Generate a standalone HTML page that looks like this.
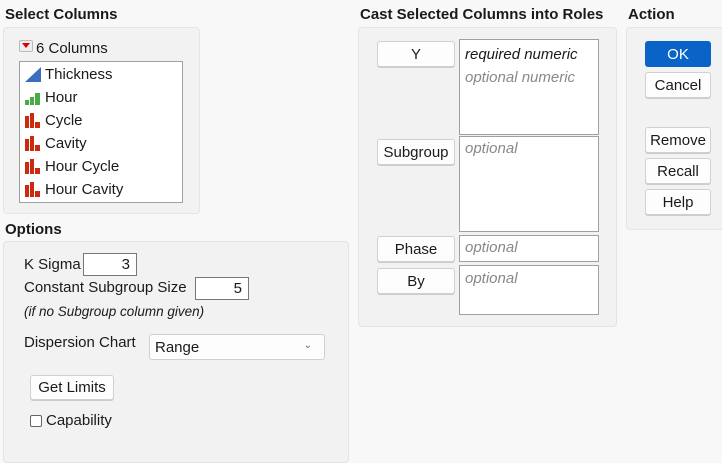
<!DOCTYPE html><html><head><style>
body{margin:0;width:722px;height:450px;background:#f8f8f8;font-family:"Liberation Sans",sans-serif;font-size:15px;color:#1a1a1a;position:relative;overflow:hidden}
.a{position:absolute;white-space:nowrap}
.t{font-weight:bold;font-size:15px}
.p{position:absolute;background:#f2f2f2;border:1px solid #e4e4e4;border-radius:4px}
.b{position:absolute;background:#fdfdfd;border:1px solid #d0d0d0;border-radius:3px;text-align:center;box-sizing:border-box;box-shadow:0 1px 0 #ccc}
.box{position:absolute;background:#fff;border:1px solid #a0a0a0;box-sizing:border-box;white-space:nowrap}
.i{font-style:italic;color:#888}
.it{position:absolute;left:4px;height:23px;line-height:23px}
.it span{position:absolute;left:21px;white-space:nowrap}
</style></head><body>
<div class="a t" style="left:5px;top:6px">Select Columns</div>
<div class="p" style="left:3px;top:27px;width:195px;height:185px"></div>
<div class="a" style="left:19px;top:40px;width:12px;height:10px;background:#eee;border:1px solid #bbb;border-radius:2px"><div style="position:absolute;left:2px;top:2px;width:0;height:0;border-left:4px solid transparent;border-right:4px solid transparent;border-top:5px solid #d00"></div></div>
<div class="a" style="left:36px;top:40px">6 Columns</div>
<div class="box" style="left:19px;top:61px;width:164px;height:142px">
<div class="it" style="top:1px"><svg width="18" height="16" style="position:absolute;top:4px"><polygon points="1,15 17,15 17,0" fill="#3a6fc0"/></svg><span>Thickness</span></div>
<div class="it" style="top:24px"><svg width="18" height="16" style="position:absolute;top:4px"><rect x="1" y="10" width="4" height="5" fill="#4aaa4a"/><rect x="6" y="7" width="4" height="8" fill="#4aaa4a"/><rect x="11" y="3" width="5" height="12" fill="#4aaa4a"/></svg><span>Hour</span></div>
<div class="it" style="top:47px"><svg width="18" height="16" style="position:absolute;top:4px"><rect x="1" y="3" width="4" height="12" fill="#cc2a10"/><rect x="6" y="0" width="4" height="15" fill="#cc2a10"/><rect x="11" y="9" width="5" height="6" fill="#cc2a10"/></svg><span>Cycle</span></div>
<div class="it" style="top:70px"><svg width="18" height="16" style="position:absolute;top:4px"><rect x="1" y="3" width="4" height="12" fill="#cc2a10"/><rect x="6" y="0" width="4" height="15" fill="#cc2a10"/><rect x="11" y="9" width="5" height="6" fill="#cc2a10"/></svg><span>Cavity</span></div>
<div class="it" style="top:93px"><svg width="18" height="16" style="position:absolute;top:4px"><rect x="1" y="3" width="4" height="12" fill="#cc2a10"/><rect x="6" y="0" width="4" height="15" fill="#cc2a10"/><rect x="11" y="9" width="5" height="6" fill="#cc2a10"/></svg><span>Hour Cycle</span></div>
<div class="it" style="top:116px"><svg width="18" height="16" style="position:absolute;top:4px"><rect x="1" y="3" width="4" height="12" fill="#cc2a10"/><rect x="6" y="0" width="4" height="15" fill="#cc2a10"/><rect x="11" y="9" width="5" height="6" fill="#cc2a10"/></svg><span>Hour Cavity</span></div>
</div>
<div class="a t" style="left:5px;top:221px">Options</div>
<div class="p" style="left:3px;top:241px;width:344px;height:220px"></div>
<div class="a" style="left:24px;top:256px">K Sigma</div>
<div class="box" style="left:83px;top:253px;width:54px;height:23px;border-color:#777;text-align:right;padding-right:6px;line-height:21px">3</div>
<div class="a" style="left:24px;top:279px">Constant Subgroup Size</div>
<div class="box" style="left:195px;top:277px;width:54px;height:23px;border-color:#777;text-align:right;padding-right:6px;line-height:21px">5</div>
<div class="a" style="left:24px;top:304px;font-style:italic;font-size:13.5px">(if no Subgroup column given)</div>
<div class="a" style="left:24px;top:334px">Dispersion Chart</div>
<div class="b" style="left:149px;top:334px;width:176px;height:26px;text-align:left;padding-left:5px;line-height:26px;box-shadow:none">Range<span style="position:absolute;right:12px;top:-2px;font-size:10px;color:#666">&#8964;</span></div>
<div class="b" style="left:30px;top:375px;width:84px;height:25px;line-height:24px">Get Limits</div>
<div class="a" style="left:30px;top:415px;width:10px;height:10px;border:1px solid #666;border-radius:2px;background:#fff"></div>
<div class="a" style="left:46px;top:412px">Capability</div>
<div class="a t" style="left:360px;top:6px">Cast Selected Columns into Roles</div>
<div class="p" style="left:358px;top:27px;width:257px;height:298px"></div>
<div class="b" style="left:377px;top:41px;width:78px;height:26px;line-height:26px">Y</div>
<div class="box" style="left:459px;top:39px;width:140px;height:96px;padding:3px 5px;line-height:23px"><i>required numeric</i><br><span class="i">optional numeric</span></div>
<div class="b" style="left:377px;top:139px;width:78px;height:26px;line-height:26px">Subgroup</div>
<div class="box" style="left:459px;top:136px;width:140px;height:96px;padding:3px 5px"><span class="i">optional</span></div>
<div class="b" style="left:377px;top:236px;width:78px;height:26px;line-height:26px">Phase</div>
<div class="box" style="left:459px;top:235px;width:140px;height:27px;padding:3px 5px"><span class="i">optional</span></div>
<div class="b" style="left:377px;top:268px;width:78px;height:26px;line-height:26px">By</div>
<div class="box" style="left:459px;top:265px;width:140px;height:50px;padding:4px 5px"><span class="i">optional</span></div>
<div class="a t" style="left:628px;top:6px">Action</div>
<div class="p" style="left:626px;top:27px;width:100px;height:201px"></div>
<div class="b" style="left:645px;top:41px;width:66px;height:26px;line-height:26px;background:#0a64c8;border-color:#0a64c8;color:#fff;box-shadow:none">OK</div>
<div class="b" style="left:645px;top:72px;width:66px;height:26px;line-height:26px">Cancel</div>
<div class="b" style="left:645px;top:127px;width:66px;height:26px;line-height:26px">Remove</div>
<div class="b" style="left:645px;top:158px;width:66px;height:26px;line-height:26px">Recall</div>
<div class="b" style="left:645px;top:189px;width:66px;height:26px;line-height:26px">Help</div>
</body></html>
